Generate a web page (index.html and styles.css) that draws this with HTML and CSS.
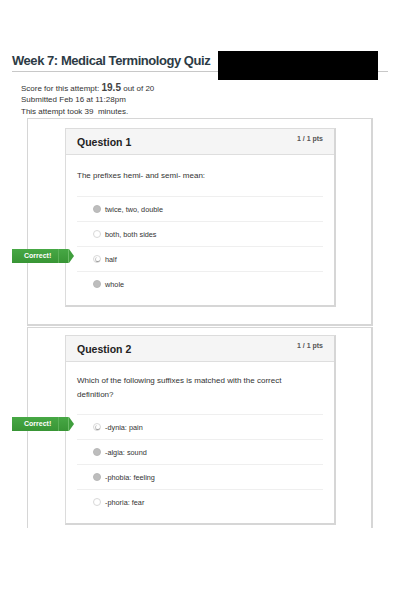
FILE: index.html
```html
<!DOCTYPE html>
<html>
<head>
<meta charset="utf-8">
<link rel="stylesheet" href="styles.css">
</head>
<body>
<div class="page">
  <div class="title-wrap">
    <h1 class="title">Week 7: Medical Terminology Quiz</h1>
    <div class="redact"></div>
  </div>
  <div class="meta">
    <div class="meta-line">Score for this attempt: <span class="score">19.5</span> out of 20</div>
    <div class="meta-line">Submitted Feb 16 at 11:28pm</div>
    <div class="meta-line">This attempt took 39&nbsp; minutes.</div>
  </div>

  <div class="outer">
    <div class="card">
      <div class="card-head">
        <span class="qname">Question 1</span>
        <span class="pts">1 / 1 pts</span>
      </div>
      <div class="card-body">
        <p class="qtext">The prefixes hemi- and semi- mean:</p>
        <div class="answers">
          <div class="row"><span class="radio filled"></span><span class="ans">twice, two, double</span></div>
          <div class="row"><span class="radio"></span><span class="ans">both, both sides</span></div>
          <div class="row"><span class="badge">Correct!</span><span class="radio chosen"></span><span class="ans">half</span></div>
          <div class="row"><span class="radio filled"></span><span class="ans">whole</span></div>
        </div>
      </div>
    </div>
  </div>

  <div class="outer last">
    <div class="card">
      <div class="card-head">
        <span class="qname">Question 2</span>
        <span class="pts">1 / 1 pts</span>
      </div>
      <div class="card-body body-tight">
        <p class="qtext qtext-tight">Which of the following suffixes is matched with the correct definition?</p>
        <div class="answers">
          <div class="row"><span class="badge">Correct!</span><span class="radio chosen"></span><span class="ans">-dynia: pain</span></div>
          <div class="row"><span class="radio filled"></span><span class="ans">-algia: sound</span></div>
          <div class="row"><span class="radio filled"></span><span class="ans">-phobia: feeling</span></div>
          <div class="row"><span class="radio"></span><span class="ans">-phoria: fear</span></div>
        </div>
      </div>
    </div>
  </div>
</div>
</body>
</html>
```

FILE: styles.css
```css
html, body {
  margin: 0;
  padding: 0;
  background: #fff;
}
body {
  font-family: "Liberation Sans", Arial, sans-serif;
  color: #333;
}
.page {
  width: 400px;
  height: 600px;
  overflow: hidden;
  padding-top: 51px;
  box-sizing: border-box;
}
.title-wrap {
  position: relative;
  margin: 0 12px;
  border-bottom: 1px solid #c8c8c8;
  height: 20px;
}
.title {
  margin: 0;
  font-size: 13px;
  letter-spacing: -0.45px;
  font-weight: bold;
  color: #2d3b45;
  line-height: 20px;
}
.redact {
  position: absolute;
  left: 206px;
  top: 0;
  width: 160px;
  height: 29px;
  background: #000;
}
.meta {
  padding: 10px 0 0 21px;
  font-size: 8px;
  color: #333;
}
.meta-line {
  height: 12px;
  line-height: 12px;
}
.score {
  font-size: 10px;
  font-weight: bold;
  color: #444;
}
.outer {
  margin: 0 27px 1px 27px;
  border: 1px solid #d6d6d6;
  border-right-width: 2px;
  border-bottom-width: 2px;
  padding: 9px 0 17px 37px;
}
.outer.last {
  border-bottom: none;
  padding-top: 7px;
  padding-bottom: 3px;
}
.card {
  width: 268px;
  border: 1px solid #dcdcdc;
  border-right: 2px solid #d6d6d6;
  border-bottom: 2px solid #d6d6d6;
}
.card-head {
  height: 25px;
  background: #f5f5f5;
  border-bottom: 1px solid #dedede;
  display: flex;
  align-items: center;
  justify-content: space-between;
  padding: 0 11px;
}
.qname {
  font-size: 10.5px;
  font-weight: bold;
  color: #222;
}
.pts {
  font-size: 7px;
  font-weight: bold;
  color: #555;
  align-self: flex-start;
  margin-top: 6px;
}
.card-body {
  padding: 14px 11px 9px 11px;
}
.card-body.body-tight {
  padding-top: 12px;
}
.qtext {
  margin: 0 0 13px 0;
  padding-right: 34px;
  font-size: 8px;
  line-height: 14px;
  color: #333;
}
.qtext.qtext-tight {
  margin-bottom: 12px;
}
.row {
  position: relative;
  height: 25px;
  border-top: 1px solid #efefef;
  box-sizing: border-box;
  display: flex;
  align-items: center;
  padding-left: 16px;
  font-size: 7.3px;
  color: #333;
}
.radio {
  width: 8px;
  height: 8px;
  border-radius: 50%;
  box-sizing: border-box;
  border: 1px solid #d8d8d8;
  background: #fff;
  margin-right: 4px;
  position: relative;
}
.radio.filled {
  background: #bdbdbd;
  border-color: #b8b8b8;
}
.radio.chosen::after {
  content: "";
  position: absolute;
  left: 1px;
  top: 1px;
  width: 4px;
  height: 4px;
  border-radius: 50%;
  border-bottom: 1px solid #9a9a9a;
  border-left: 1px solid #c8c8c8;
}
.badge {
  position: absolute;
  left: -65px;
  top: 2px;
  width: 57px;
  height: 14px;
  box-sizing: border-box;
  background: linear-gradient(#47a845, #389535);
  color: #fff;
  font-size: 7px;
  font-weight: bold;
  line-height: 14px;
  padding-left: 12px;
  border-right: 1px solid #6cbd68;
}
.badge::before {
  content: "";
  position: absolute;
  right: 9px;
  top: 0;
  width: 1px;
  height: 14px;
  background: #5cb259;
}
.badge::after {
  content: "";
  position: absolute;
  right: -6px;
  top: 0;
  border-left: 5px solid #3f9e3c;
  border-top: 7px solid transparent;
  border-bottom: 7px solid transparent;
}
```
